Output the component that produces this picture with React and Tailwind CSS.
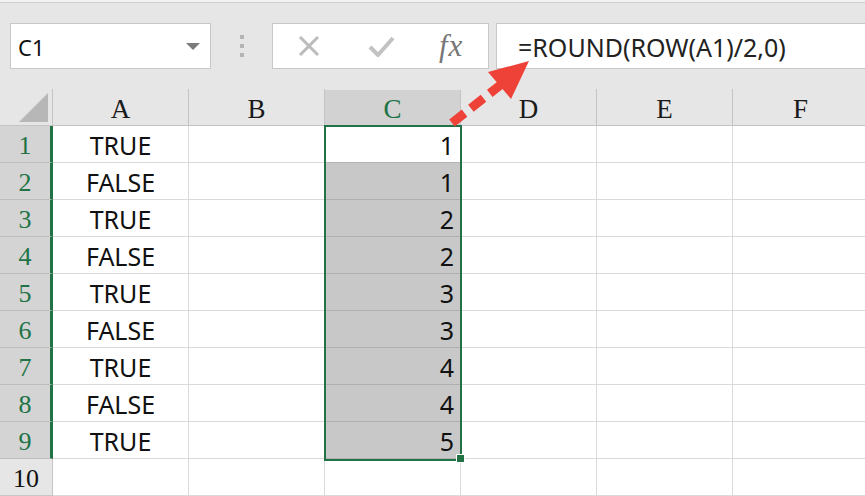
import React from "react";

const rows = [
  ["TRUE", 1],
  ["FALSE", 1],
  ["TRUE", 2],
  ["FALSE", 2],
  ["TRUE", 3],
  ["FALSE", 3],
  ["TRUE", 4],
  ["FALSE", 4],
  ["TRUE", 5],
];

const cols = ["A", "B", "C", "D", "E", "F"];

const sans = { fontFamily: '"Noto Sans", "Open Sans", sans-serif' };
const serif = { fontFamily: '"Liberation Serif", "DejaVu Serif", serif' };

// dashed red arrow pointing at the formula bar
function Arrow() {
  return (
    <svg
      className="absolute left-0 top-0 pointer-events-none"
      width="865"
      height="496"
      viewBox="0 0 865 496"
    >
      <line
        x1="452"
        y1="123"
        x2="503"
        y2="83"
        stroke="#ee4238"
        strokeWidth="9"
        strokeDasharray="16 8"
      />
      <polygon points="529,61 488,72 511,99" fill="#ee4238" />
    </svg>
  );
}

function Toolbar() {
  return (
    <div className="h-[89px] flex flex-col">
      <div className="h-[2px] bg-[#f2f2f2]" />
      <div className="h-px bg-[#d0d0d0]" />
      <div className="flex items-start pt-[20px]">
        <div className="ml-[10px] w-[201px] h-[46px] bg-white border border-[#c8c8c8] flex items-center justify-between pl-[7px] pr-[10px] pt-[2px]">
          <span className="text-[22px] text-[#111]" style={sans}>C1</span>
          <svg width="14" height="8" viewBox="0 0 14 8">
            <polygon points="0,0 14,0 7,7" fill="#7b7b7b" />
          </svg>
        </div>
        <div className="w-[61px] h-[46px] flex flex-col items-center justify-center gap-[5px]">
          <div className="w-[4px] h-[4px] bg-[#b4b4b4]" />
          <div className="w-[4px] h-[4px] bg-[#b4b4b4]" />
          <div className="w-[4px] h-[4px] bg-[#b4b4b4]" />
        </div>
        <div className="w-[217px] h-[46px] bg-white border border-[#c8c8c8] flex items-center">
          <svg className="ml-[25px]" width="22" height="20" viewBox="0 0 22 20">
            <path d="M2 1 L20 19 M20 1 L2 19" stroke="#bcbcbc" strokeWidth="3" fill="none" />
          </svg>
          <svg className="ml-[48px]" width="27" height="22" viewBox="0 0 27 22">
            <path d="M2 12 L10 20 L25 3" stroke="#c2c2c2" strokeWidth="4" fill="none" />
          </svg>
          <span className="ml-[44px] text-[31px] italic text-[#777] leading-none tracking-[1px] pb-[2px]" style={serif}>
            fx
          </span>
        </div>
        <div className="ml-[7px] flex-1 h-[46px] bg-white border border-r-0 border-[#c8c8c8] flex items-center pl-[21px] pt-[3px]">
          <span className="text-[25px] text-[#222]" style={sans}>=ROUND(ROW(A1)/2,0)</span>
        </div>
      </div>
    </div>
  );
}

function HeaderRow() {
  return (
    <div className="flex h-[37px] border-b border-[#c4c4c4]">
      <div className="w-[53px] shrink-0 border-r border-[#c4c4c4] flex items-end justify-end pr-[4px] pb-[3px]">
        <svg width="29" height="29" viewBox="0 0 29 29">
          <polygon points="29,0 29,29 0,29" fill="#b7b7b7" />
        </svg>
      </div>
      {cols.map((c) => (
        <div
          key={c}
          className={
            "w-[136px] shrink-0 border-r border-[#c4c4c4] flex items-end justify-center text-[27px] leading-[32px] " +
            (c === "C" ? "bg-[#d2d2d2] text-[#217346] mt-[1px]" : "text-[#1a1a1a]")
          }
          style={serif}
        >
          {c}
        </div>
      ))}
    </div>
  );
}

function Row({ n, a, c }) {
  const sel = c !== undefined;
  return (
    <div className="flex h-[37px]">
      <div
        className={
          "w-[53px] shrink-0 flex items-center justify-center text-[26px] pt-[3px] border-b " +
          (sel
            ? "bg-[#d4d4d4] text-[#217346] border-[#bdbdbd] border-r-[3px] border-r-[#217346]"
            : "bg-[#e6e6e6] text-[#111] border-[#c8c8c8] border-r border-r-[#c4c4c4]")
        }
        style={serif}
      >
        {n}
      </div>
      <div className="w-[136px] shrink-0 bg-white border-r border-b border-[#dadada] flex items-center justify-center pt-[4px] text-[25px] text-[#111]" style={sans}>
        {a}
      </div>
      <div className="w-[136px] shrink-0 bg-white border-r border-b border-[#dadada]" />
      <div
        className={
          "w-[136px] shrink-0 border-r border-b flex items-center justify-end pr-[6px] pt-[4px] text-[25px] text-[#111] " +
          (!sel ? "bg-white border-[#dadada]" : n === 1 ? "bg-white border-[#b5b5b5]" : "bg-[#c8c8c8] border-[#b0b0b0]")
        }
        style={sans}
      >
        {c}
      </div>
      <div className="w-[136px] shrink-0 bg-white border-r border-b border-[#dadada]" />
      <div className="w-[136px] shrink-0 bg-white border-r border-b border-[#dadada]" />
      <div className="w-[136px] shrink-0 bg-white border-r border-b border-[#dadada]" />
    </div>
  );
}

export default function App() {
  return (
    <div className="relative w-[865px] h-[496px] overflow-hidden bg-[#e6e6e6]">
      <Toolbar />
      <HeaderRow />
      {rows.map(([a, c], i) => (
        <Row key={i} n={i + 1} a={a} c={c} />
      ))}
      <Row n={10} />

      {/* selection marquee over column C */}
      <div className="absolute left-[324px] top-[125px] w-[138px] h-[336px] border-2 border-[#217346]" />
      <div className="absolute left-[456px] top-[454px] w-[9px] h-[9px] bg-[#217346] border border-white" />

      <Arrow />
    </div>
  );
}
